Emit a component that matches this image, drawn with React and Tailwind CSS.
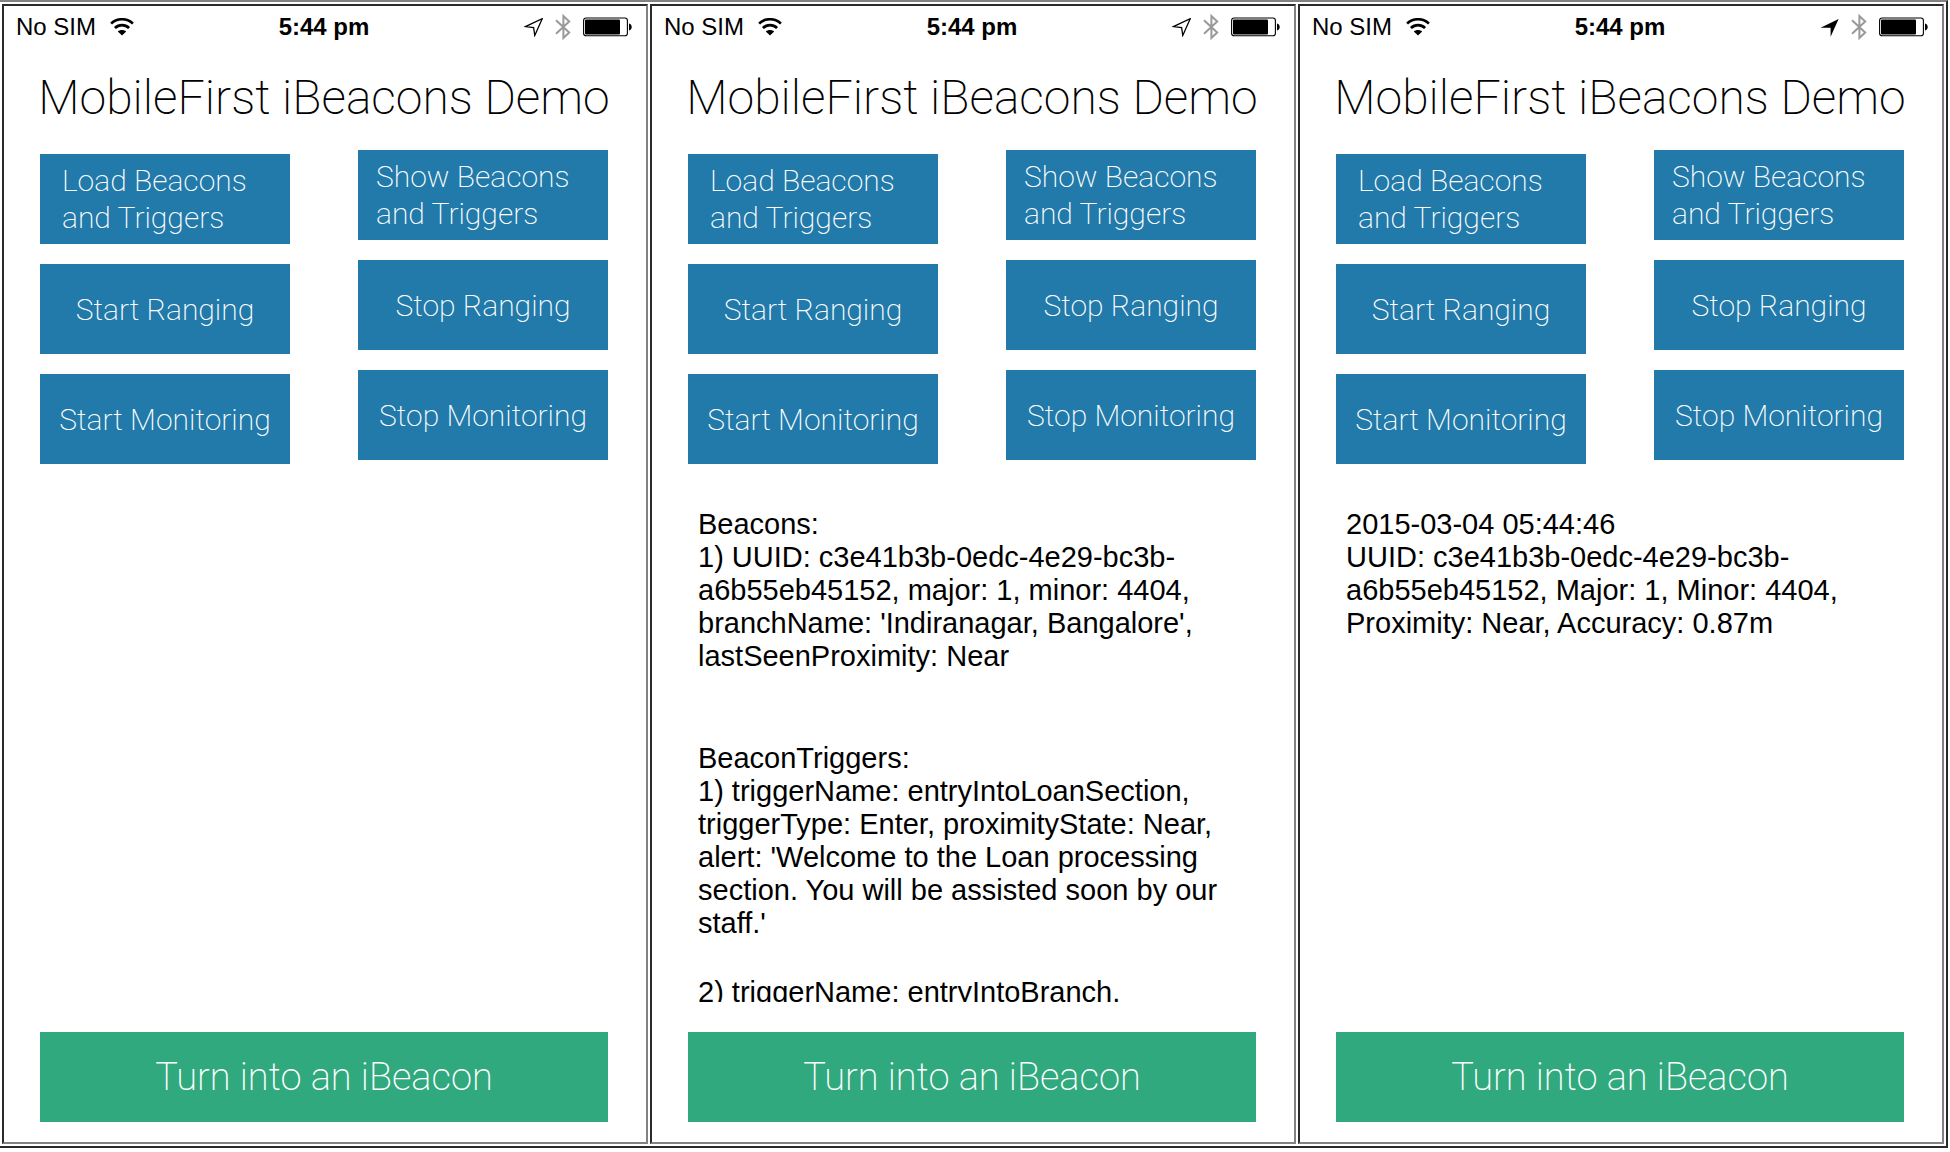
import React from "react";

function WifiIcon() {
  return (
    <svg className="h-[18px] w-6" viewBox="0 0 24 18" fill="none" stroke="#000" aria-hidden="true">
      <path d="M1.1 5.6C7-0.2 17-0.2 22.9 5.6" strokeWidth="2.7" />
      <path d="M4.9 10.1C9 6.2 15 6.2 19.1 10.1" strokeWidth="2.7" />
      <path d="M12 17.6L7.8 13.4C10 11.4 14 11.4 16.2 13.4Z" fill="#000" stroke="none" />
    </svg>
  );
}

function LocationIcon({ filled }) {
  return filled ? (
    <svg className="h-[19px] w-[19px]" viewBox="0 0 19 19" aria-hidden="true">
      <path d="M18.6 0.9L10.6 18.7V9.8H0.6Z" fill="#000" />
    </svg>
  ) : (
    <svg className="h-[19px] w-[19px]" viewBox="0 0 19 19" fill="none" stroke="#000" strokeWidth="1.3" aria-hidden="true">
      <path d="M18.2 0.7L10.8 17.4L9.6 9.6L1.4 8.6Z" />
    </svg>
  );
}

function BluetoothIcon() {
  return (
    <svg className="h-[26px] w-4" viewBox="0 0 16 26" fill="none" stroke="#999" strokeWidth="2" aria-hidden="true">
      <path d="M1 6.2L14.2 18.6L8.4 24V2L14.2 7.4L1 19.8" />
    </svg>
  );
}

function BatteryIcon() {
  return (
    <svg className="h-5 w-[49px]" viewBox="0 0 49 20" aria-hidden="true">
      <rect x="0.6" y="1" width="43.8" height="17.8" rx="2.6" fill="none" stroke="#000" strokeWidth="1.1" />
      <rect x="2" y="2.4" width="35" height="15" rx="1" fill="#000" />
      <path d="M46 6.6C49.6 7 49.6 13 46 13.4Z" fill="#000" />
    </svg>
  );
}

function StatusBar({ locationActive }) {
  return (
    <header className="grid h-[42px] grid-cols-[1fr_auto_1fr] items-center pr-3.5 pl-3 text-2xl text-black">
      <div className="flex items-center gap-3.5">
        <span>No SIM</span>
        <WifiIcon />
      </div>
      <time className="font-bold">5:44 pm</time>
      <div className="flex items-center justify-end gap-3">
        <LocationIcon filled={locationActive} />
        <BluetoothIcon />
        <BatteryIcon />
      </div>
    </header>
  );
}

const base = "h-[90px] w-full bg-[#217aa9] font-['Roboto',sans-serif] text-[30px] leading-[37px] font-extralight text-white";

function ActionButton({ children }) {
  return <button type="button" className={base}>{children}</button>;
}

function Screen({ log, locationActive }) {
  return (
    <section className="flex min-h-0 min-w-0 flex-col border-2 border-t-[#2b2929] border-r-[#828282] border-b-[#828282] border-l-[#2b2929] bg-white">
      <StatusBar locationActive={locationActive} />
      <main className="flex min-h-0 flex-1 flex-col pt-[22px] pr-[38px] pb-5 pl-9">
        <h1 className="-mx-1 text-center font-['Roboto',sans-serif] text-5xl leading-[56px] font-extralight whitespace-nowrap text-black">
          MobileFirst iBeacons Demo
        </h1>
        <div className="grid grid-cols-2 gap-[68px] pt-6">
          <div className="flex flex-col gap-5 pt-1">
            <button type="button" className={base + " pl-[22px] text-left"}>
              Load Beacons<br />and Triggers
            </button>
            <ActionButton>Start Ranging</ActionButton>
            <ActionButton>Start Monitoring</ActionButton>
          </div>
          <div className="flex flex-col gap-5">
            <button type="button" className={base + " pl-[18px] text-left"}>
              Show Beacons<br />and Triggers
            </button>
            <ActionButton>Stop Ranging</ActionButton>
            <ActionButton>Stop Monitoring</ActionButton>
          </div>
        </div>
        <div className="mt-11 min-h-0 flex-1 overflow-hidden pl-2.5 text-[29px] leading-[33px] text-black">
          {log}
        </div>
        <button
          type="button"
          className="mt-[30px] h-[90px] w-full shrink-0 bg-[#31a97e] font-['Roboto',sans-serif] text-[38px] font-extralight text-white"
        >
          Turn into an iBeacon
        </button>
      </main>
    </section>
  );
}

const beaconLog = (
  <>
    <p className="mb-[69px]">
      Beacons:<br />
      1) UUID: c3e41b3b-0edc-4e29-bc3b-a6b55eb45152, major: 1, minor: 4404, branchName: 'Indiranagar, Bangalore',
      lastSeenProximity: Near
    </p>
    <p className="mb-9">
      BeaconTriggers:<br />
      1) triggerName: entryIntoLoanSection, triggerType: Enter, proximityState: Near, alert: 'Welcome to the Loan
      processing section. You will be assisted soon by our staff.'
    </p>
    <p>2) triggerName: entryIntoBranch,</p>
  </>
);

const rangingLog = (
  <p>
    2015-03-04 05:44:46<br />
    UUID: c3e41b3b-0edc-4e29-bc3b-a6b55eb45152, Major: 1, Minor: 4404, Proximity: Near, Accuracy: 0.87m
  </p>
);

export default function App() {
  return (
    <div className="flex h-screen flex-col bg-white pr-0.5 pb-1 font-['Liberation_Sans',Arial,sans-serif]">
      <div className="grid min-h-0 flex-1 grid-cols-3 grid-rows-1 gap-0.5 border-t-2 border-r-2 border-b-2 border-t-[#828282] border-r-[#2b2929] border-b-[#2b2929] p-0.5">
        <Screen />
        <Screen log={beaconLog} />
        <Screen log={rangingLog} locationActive />
      </div>
    </div>
  );
}
